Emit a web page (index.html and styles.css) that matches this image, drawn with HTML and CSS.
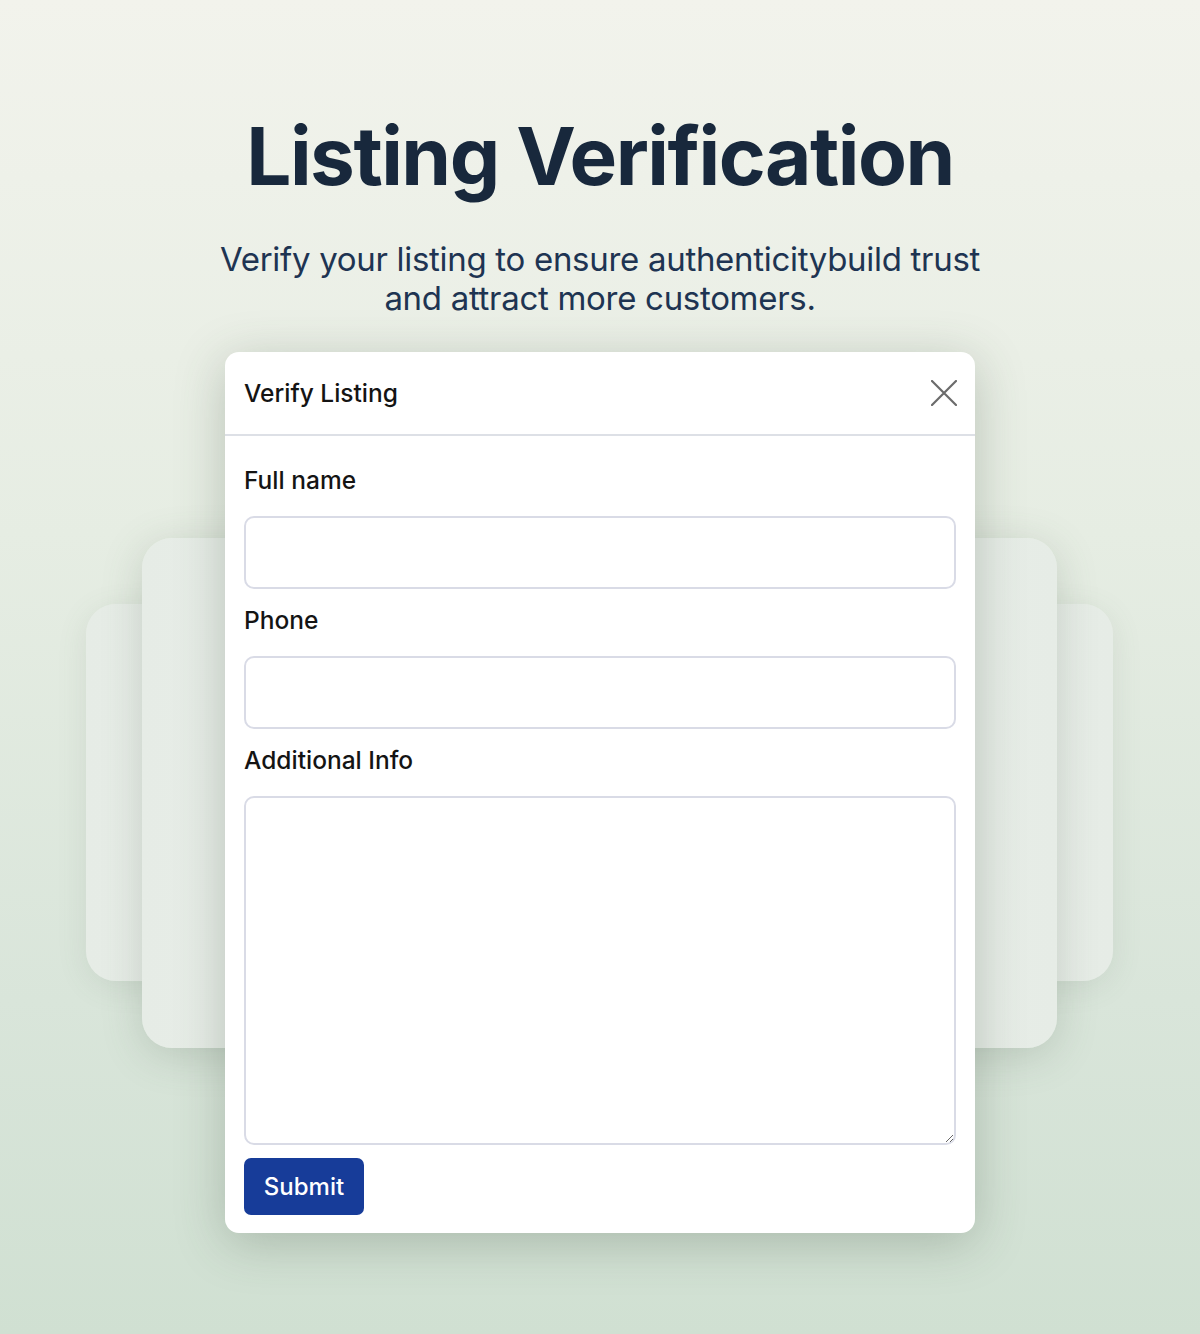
FILE: index.html
```html
<!DOCTYPE html>
<html lang="en">
<head>
<meta charset="utf-8">
<title>Listing Verification</title>
<link rel="stylesheet" href="styles.css">
</head>
<body>
<main class="page">
  <header class="hero">
    <h1 class="hero-title">Listing Verification</h1>
    <p class="hero-text">Verify your listing to ensure authenticitybuild trust and attract more customers.</p>
  </header>
  <section class="stage">
    <div class="deck deck-back" aria-hidden="true"></div>
    <div class="deck deck-mid" aria-hidden="true"></div>
    <div class="modal">
      <div class="modal-head">
        <h2 class="modal-title">Verify Listing</h2>
        <button class="close-btn" type="button" aria-label="Close">
          <svg viewBox="0 0 26 26" width="26" height="26"><path d="M1 1 L25 25 M25 1 L1 25" stroke="#6b6b6b" stroke-width="2.2" stroke-linecap="round" fill="none"/></svg>
        </button>
      </div>
      <form class="modal-body">
        <label class="field-label" for="fullname">Full name</label>
        <input class="field-input" id="fullname" type="text">
        <label class="field-label" for="phone">Phone</label>
        <input class="field-input" id="phone" type="text">
        <label class="field-label" for="info">Additional Info</label>
        <textarea class="field-area" id="info"></textarea>
        <button class="submit-btn" type="button">Submit</button>
      </form>
    </div>
  </section>
</main>
</body>
</html>
```

FILE: styles.css
```css
* { box-sizing: border-box; }
html, body { margin: 0; padding: 0; }
body {
  min-height: 1334px;
  background: linear-gradient(180deg, #f2f3ec 0%, #e6ede3 40%, #d9e5da 75%, #d0e0d2 100%);
  font-family: "Inter", "Liberation Sans", sans-serif;
}
.page {
  display: flex;
  flex-direction: column;
  align-items: center;
  padding-top: 107px;
}
.hero { text-align: center; }
.hero-title {
  margin: 0;
  font-size: 80px;
  line-height: 98px;
  font-weight: 700;
  letter-spacing: -1.5px;
  color: #18283c;
}
.hero-text {
  margin: 35px auto 0;
  width: 790px;
  font-size: 33px;
  line-height: 39px;
  font-weight: 400;
  color: #1e3452;
  letter-spacing: -0.3px;
}
.stage {
  position: relative;
  width: 1200px;
  display: flex;
  justify-content: center;
  margin-top: 34px;
}
.deck {
  position: absolute;
  border-radius: 30px;
  background: linear-gradient(90deg, #e6ece6 0%, #ecf1ec 50%, #e6ece6 100%);
}
.deck-back {
  left: 86px;
  width: 1027px;
  top: 252px;
  height: 377px;
  box-shadow: 0 6px 30px rgba(90, 110, 90, 0.12);
}
.deck-mid {
  left: 142px;
  width: 915px;
  top: 186px;
  height: 510px;
  box-shadow: 0 8px 40px rgba(80, 100, 80, 0.22);
}
.modal {
  position: relative;
  width: 750px;
  background: #ffffff;
  border-radius: 14px;
  box-shadow: 0 10px 50px rgba(60, 80, 60, 0.28);
  overflow: hidden;
}
.modal-head {
  height: 84px;
  display: flex;
  align-items: center;
  justify-content: space-between;
  padding: 0 18px 0 19px;
  border-bottom: 2px solid #dde0e6;
}
.modal-title {
  margin: 0;
  font-size: 24.5px;
  font-weight: 500;
  color: #141414;
}
.close-btn {
  border: 0;
  background: none;
  padding: 0;
  width: 26px;
  height: 26px;
  display: flex;
}
.modal-body {
  display: flex;
  flex-direction: column;
  align-items: flex-start;
  padding: 30px 19px 18px;
}
.field-label {
  font-size: 24.5px;
  line-height: 28px;
  font-weight: 500;
  color: #141414;
  margin-bottom: 22px;
}
.field-input {
  width: 712px;
  height: 73px;
  border: 2px solid #d9dbe6;
  border-radius: 10px;
  margin: 0 0 17px;
  background: #fff;
}
.field-area {
  width: 712px;
  height: 349px;
  border: 2px solid #d9dbe6;
  border-radius: 10px;
  margin: 0 0 13px;
  background: #fff;
  resize: vertical;
}
.submit-btn {
  width: 120px;
  height: 57px;
  border: 0;
  border-radius: 7px;
  background: #173c99;
  color: #ffffff;
  font-family: "Inter", "Liberation Sans", sans-serif;
  font-size: 24px;
  font-weight: 500;
}
```
